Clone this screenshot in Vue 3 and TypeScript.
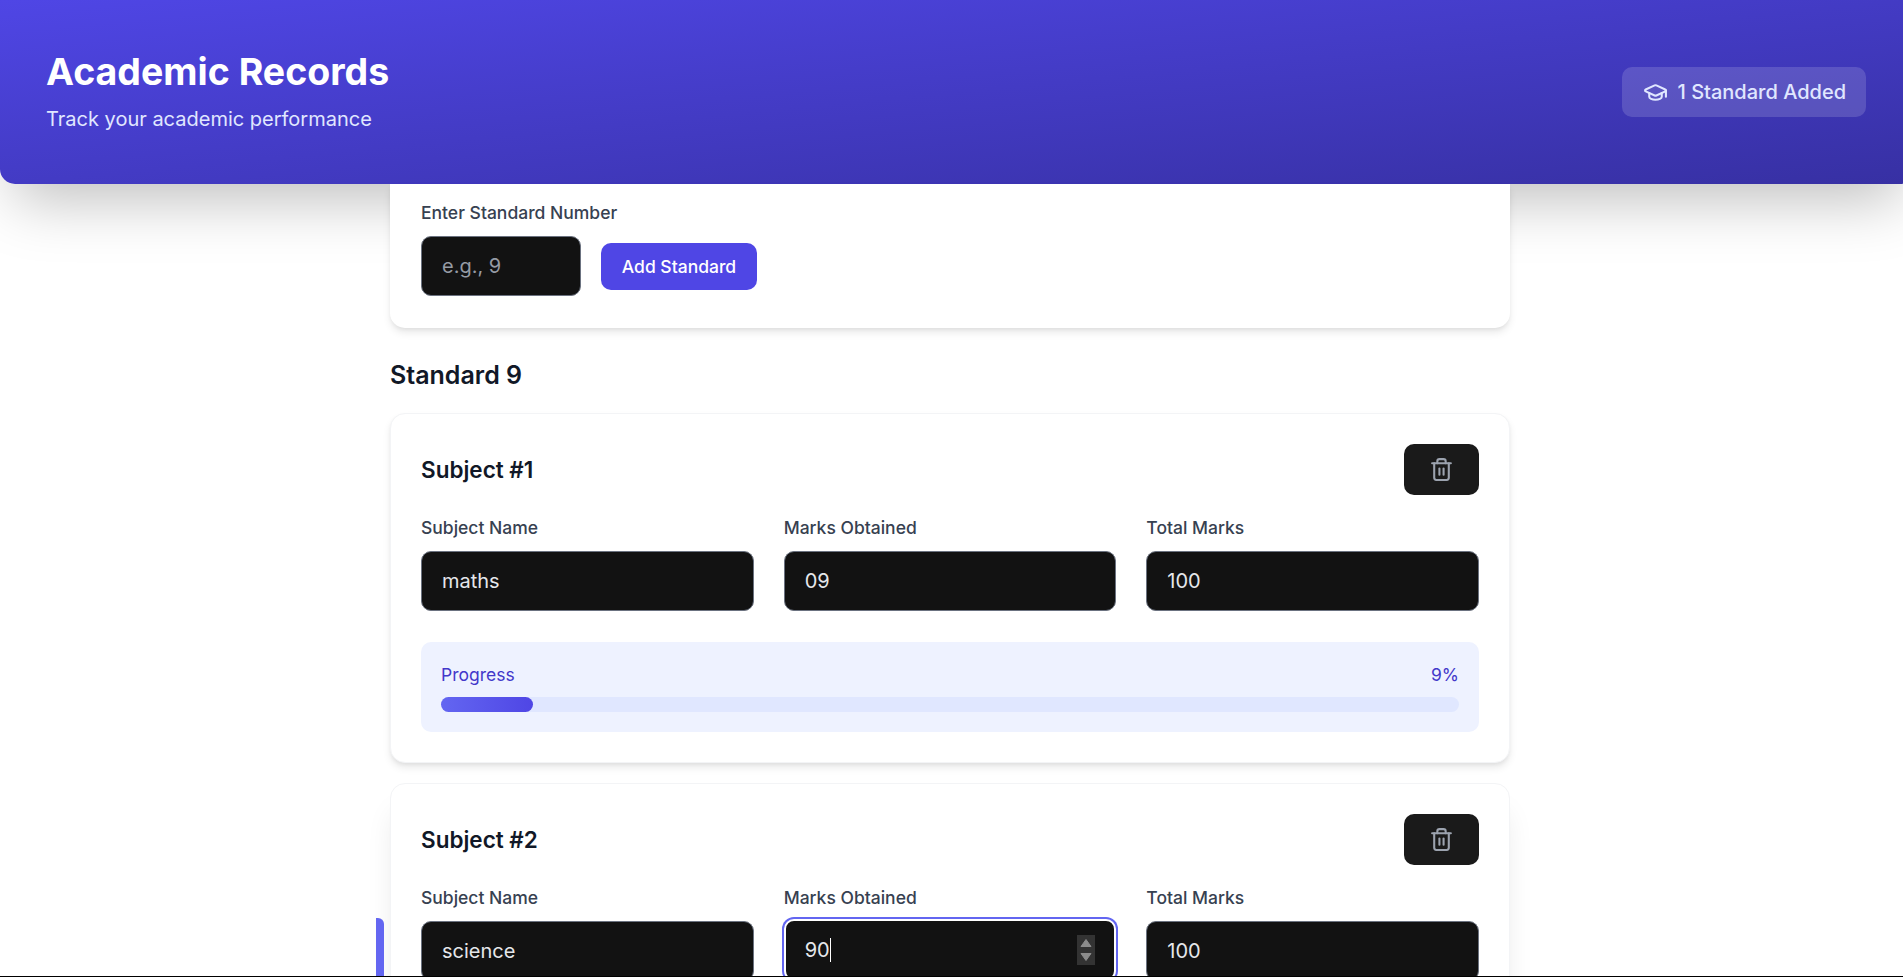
<script setup lang="ts">
import { ref } from 'vue'

interface Subject {
  name: string
  marks: string
  total: string
}

const standardNumber = ref('')
const subjects = ref<Subject[]>([
  { name: 'maths', marks: '09', total: '100' },
  { name: 'science', marks: '90', total: '100' },
])

function percent(s: Subject) {
  return Math.round((Number(s.marks) / Number(s.total)) * 100)
}
</script>

<template>
  <div class="page">
    <header class="hero">
      <div>
        <h1>Academic Records</h1>
        <p>Track your academic performance</p>
      </div>
      <div class="badge">
        <svg width="25" height="25" viewBox="0 0 24 24" fill="none" stroke="currentColor" stroke-width="2" stroke-linecap="round" stroke-linejoin="round">
          <path d="M21.42 10.922a1 1 0 0 0-.019-1.838L12.83 5.18a2 2 0 0 0-1.66 0L2.6 9.08a1 1 0 0 0 0 1.832l8.57 3.908a2 2 0 0 0 1.66 0z" />
          <path d="M22 10v6" />
          <path d="M6 12.5V16a6 3 0 0 0 12 0v-3.5" />
        </svg>
        <span>1 Standard Added</span>
      </div>
    </header>

    <main class="content">
      <section class="add-card">
        <label class="field-label">Enter Standard Number</label>
        <div class="add-row">
          <input v-model="standardNumber" class="dark-input small" placeholder="e.g., 9" />
          <button class="add-btn">Add Standard</button>
        </div>
      </section>

      <h2 class="standard-title">Standard 9</h2>

      <section v-for="(s, i) in subjects" :key="i" class="card" :class="{ active: i === 1 }">
        <div class="card-head">
          <h3>Subject #{{ i + 1 }}</h3>
          <button class="del-btn" aria-label="Delete subject">
            <svg width="25" height="25" viewBox="0 0 24 24" fill="none" stroke="currentColor" stroke-width="2" stroke-linecap="round" stroke-linejoin="round">
              <path d="M3 6h18" />
              <path d="M19 6v14c0 1-1 2-2 2H7c-1 0-2-1-2-2V6" />
              <path d="M8 6V4c0-1 1-2 2-2h4c1 0 2 1 2 2v2" />
              <line x1="10" y1="11" x2="10" y2="17" />
              <line x1="14" y1="11" x2="14" y2="17" />
            </svg>
          </button>
        </div>

        <div class="fields">
          <div>
            <label class="field-label">Subject Name</label>
            <input v-model="s.name" class="dark-input" />
          </div>
          <div>
            <label class="field-label">Marks Obtained</label>
            <div v-if="i === 1" class="dark-input focused">
              <span>{{ s.marks }}</span><span class="caret"></span>
              <span class="spinner">
                <svg width="18" height="30" viewBox="0 0 18 30">
                  <path d="M9 4.5 14 11.5H4z" fill="#8c8c8c" stroke="#8c8c8c" stroke-linejoin="round" />
                  <path d="M9 25.5 14 18.5H4z" fill="#8c8c8c" stroke="#8c8c8c" stroke-linejoin="round" />
                </svg>
              </span>
            </div>
            <input v-else v-model="s.marks" class="dark-input" />
          </div>
          <div>
            <label class="field-label">Total Marks</label>
            <input v-model="s.total" class="dark-input" />
          </div>
        </div>

        <div class="progress">
          <div class="progress-top">
            <span>Progress</span>
            <span>{{ percent(s) }}%</span>
          </div>
          <div class="track">
            <div class="fill" :style="{ width: percent(s) + '%' }"></div>
          </div>
        </div>
      </section>
    </main>

    <div class="side-tab"></div>
    <div class="bottom-line"></div>
  </div>
</template>

<style>
html, body { overflow: hidden; background: #fff; }
</style>

<style scoped>
.page {
  position: relative;
  height: 100vh;
  overflow: hidden;
  padding-right: 3px;
  box-sizing: border-box;
  font-family: Inter, "Liberation Sans", sans-serif;
  color: #111827;
}
.hero {
  position: relative;
  height: 184px;
  margin-right: -15px;
  box-sizing: border-box;
  padding: 0 49px 3px 46px;
  display: flex;
  align-items: center;
  justify-content: space-between;
  background: linear-gradient(to bottom right, #4f46e5, #3730a3);
  border-radius: 0 0 15px 15px;
  box-shadow: 0 30px 60px -14px rgba(0, 0, 0, 0.25);
}
.hero h1 {
  margin: 0;
  font-size: 37.5px;
  line-height: 44px;
  font-weight: 700;
  color: #fff;
}
.hero p {
  margin: 13px 0 0;
  font-size: 20px;
  line-height: 24px;
  color: #e0e7ff;
}
.badge {
  display: flex;
  align-items: center;
  gap: 10px;
  height: 50px;
  box-sizing: border-box;
  padding: 0 20px 0 21px;
  margin-top: 3px;
  border-radius: 10px;
  background: rgba(255, 255, 255, 0.15);
  color: #e0e7ff;
  font-size: 20px;
  font-weight: 500;
}
.content {
  position: relative;
  width: 1120px;
  margin: 0 auto;
}
.add-card {
  padding: 19px 31px 32px;
  background: #fff;
  border-radius: 0 0 15px 15px;
  box-shadow: 0 5px 8px -1px rgba(0, 0, 0, 0.1), 0 2px 4px -1px rgba(0, 0, 0, 0.06);
}
.field-label {
  display: block;
  margin-bottom: 13px;
  font-size: 17.5px;
  line-height: 20px;
  font-weight: 500;
  color: #374151;
}
.add-row {
  display: flex;
  align-items: center;
  gap: 20px;
}
.dark-input {
  display: block;
  width: 100%;
  height: 60px;
  box-sizing: border-box;
  padding: 0 20px;
  background: #121212;
  border: 1px solid #6b7280;
  border-radius: 10px;
  color: #e5e7eb;
  font-family: inherit;
  font-size: 20px;
  outline: none;
}
.dark-input::placeholder { color: #959ba4; }
.dark-input.small { width: 160px; }
.dark-input.focused {
  display: flex;
  align-items: center;
  height: 62px;
  margin-top: -2px;
  padding: 0 19px;
  border: 2px solid #fff;
  box-shadow: 0 0 0 2px #6366f1;
}
.caret {
  width: 1px;
  height: 24px;
  background: #fff;
}
.spinner {
  margin-left: auto;
  display: flex;
  width: 18px;
  height: 30px;
  background: #333;
}
.add-btn {
  width: 156px;
  height: 47px;
  border: none;
  border-radius: 10px;
  background: #4f46e5;
  color: #fff;
  font-family: inherit;
  font-size: 17.5px;
  font-weight: 500;
}
.standard-title {
  margin: 33px 0 23px;
  font-size: 25px;
  line-height: 29px;
  font-weight: 600;
  color: #111827;
}
.card {
  box-sizing: border-box;
  padding: 30px 30px 30px;
  margin-bottom: 20px;
  background: #fff;
  border: 1px solid #f3f4f6;
  border-radius: 15px;
  box-shadow: 0 5px 8px -1px rgba(0, 0, 0, 0.1), 0 2px 4px -1px rgba(0, 0, 0, 0.06);
}
.card.active {
  box-shadow: 0 24px 30px -6px rgba(0, 0, 0, 0.1), 0 10px 12px -6px rgba(0, 0, 0, 0.04);
}
.card-head {
  display: flex;
  align-items: center;
  justify-content: space-between;
  margin-bottom: 23px;
}
.card-head h3 {
  margin: 0;
  font-size: 22.5px;
  font-weight: 600;
  color: #111827;
}
.del-btn {
  display: flex;
  align-items: center;
  justify-content: center;
  width: 75px;
  height: 51px;
  border: none;
  border-radius: 10px;
  background: #1a1a1a;
  color: #9ca3af;
}
.fields {
  display: grid;
  grid-template-columns: repeat(3, 1fr);
  gap: 30px;
}
.progress {
  margin-top: 31px;
  padding: 20px;
  background: #eef2ff;
  border-radius: 10px;
}
.progress-top {
  display: flex;
  justify-content: space-between;
  margin-bottom: 9px;
  font-size: 17.5px;
  line-height: 26px;
  color: #4338ca;
}
.track {
  height: 15px;
  border-radius: 8px;
  background: #e0e7ff;
}
.fill {
  height: 100%;
  border-radius: 8px;
  background: linear-gradient(to right, #6366f1, #4f46e5);
}
.side-tab {
  position: absolute;
  left: 376px;
  top: 918px;
  width: 8px;
  height: 59px;
  border-radius: 0 6px 0 0;
  background: #6366f1;
}
.bottom-line {
  position: absolute;
  left: 0;
  right: 0;
  bottom: 0;
  height: 1px;
  background: #000;
}
</style>
